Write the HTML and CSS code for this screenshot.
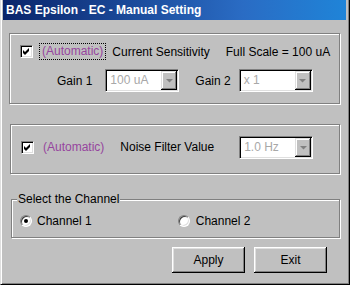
FILE: index.html
```html
<!DOCTYPE html>
<html lang="en">
<head>
    <meta charset="UTF-8">
    <title>BAS Epsilon - EC - Manual Setting</title>
    <link rel="stylesheet" href="styles.css">
</head>
<body>
    <div class="window">
        <div class="title-bar">BAS Epsilon - EC - Manual Setting</div>

        <!-- current sensitivity -->
        <div class="group group-gain">
            <div class="row row-top">
                <span class="check"><svg width="11" height="11" viewBox="0 0 11 11"><polygon points="2,4 4,6 8,2 8,5 4,9 2,7" fill="#000"/></svg></span>
                <span class="auto focus">(Automatic)</span>
                <span class="lbl lbl-sens">Current Sensitivity</span>
                <span class="lbl lbl-full">Full Scale = 100 uA</span>
            </div>
            <div class="row row-gain">
                <span class="lbl lbl-gain1">Gain 1</span>
                <div class="combo combo-g1">
                    <span class="combo-value">100 uA</span>
                    <span class="combo-btn"><svg width="7" height="5" viewBox="0 0 7 5"><polygon points="0,1 7,1 3.5,4.5" fill="#808080"/></svg></span>
                </div>
                <span class="lbl lbl-gain2">Gain 2</span>
                <div class="combo combo-g2">
                    <span class="combo-value">x 1</span>
                    <span class="combo-btn"><svg width="7" height="5" viewBox="0 0 7 5"><polygon points="0,1 7,1 3.5,4.5" fill="#808080"/></svg></span>
                </div>
            </div>
        </div>

        <!-- noise filter -->
        <div class="group group-noise">
            <div class="row row-noise">
                <span class="check"><svg width="11" height="11" viewBox="0 0 11 11"><polygon points="2,4 4,6 8,2 8,5 4,9 2,7" fill="#000"/></svg></span>
                <span class="auto">(Automatic)</span>
                <span class="lbl lbl-noise">Noise Filter Value</span>
                <div class="combo combo-noise">
                    <span class="combo-value">1.0 Hz</span>
                    <span class="combo-btn"><svg width="7" height="5" viewBox="0 0 7 5"><polygon points="0,1 7,1 3.5,4.5" fill="#808080"/></svg></span>
                </div>
            </div>
        </div>

        <!-- channel -->
        <div class="group group-channel">
            <span class="legend">Select the Channel</span>
            <div class="row row-channel">
                <span class="radio checked"></span>
                <span class="lbl lbl-ch1">Channel 1</span>
                <span class="radio radio-2"></span>
                <span class="lbl lbl-ch2">Channel 2</span>
            </div>
        </div>

        <div class="buttons">
            <button class="btn btn-apply">Apply</button>
            <button class="btn btn-exit">Exit</button>
        </div>
    </div>
</body>
</html>
```

FILE: styles.css
```css
/* base */
html, body {
    margin: 0;
    padding: 0;
    background: #c0c0c0;
}
body {
    font-family: 'Liberation Sans', Arial, sans-serif;
    font-size: 12px;
    color: #000;
}

/* window frame */
.window {
    width: 350px;
    height: 285px;
    box-sizing: border-box;
    background: #c0c0c0;
    border-left: 1px solid #dfdfdf;
    border-right: 1px solid #000;
    border-bottom: 1px solid #000;
    box-shadow: inset 1px 0 #fff, inset -1px -1px #808080;
    padding: 0 3px 0 2px;
    display: flex;
    flex-direction: column;
    align-items: flex-start;
}

.title-bar {
    align-self: stretch;
    height: 20px;
    line-height: 20px;
    padding-left: 3px;
    font-weight: bold;
    font-size: 12px;
    color: #fff;
    background: linear-gradient(to right, #0a246a, #2a6cc4 70%, #1f84d8);
}

/* etched group boxes */
.group {
    box-sizing: border-box;
    position: relative;
    border: 1px solid #808080;
    box-shadow: inset 1px 1px #fff, 1px 1px #fff;
}
.group-gain {
    margin: 13px 0 0 6px;
    width: 331px;
    height: 71px;
    padding: 9px 0 0 10px;
}
.group-noise {
    margin: 20px 0 0 7px;
    width: 330px;
    height: 50px;
    padding: 10px 0 0 10px;
}
.group-channel {
    margin: 25px 0 0 8px;
    width: 329px;
    height: 39px;
    padding: 14px 0 0 8px;
}
.legend {
    position: absolute;
    top: -8px;
    left: 5px;
    padding: 0 1px;
    line-height: 14px;
    background: #c0c0c0;
}

.row {
    display: flex;
    align-items: center;
}
.row-top { height: 17px; }
.row-gain { margin-top: 9px; height: 23px; }
.row-noise { height: 24px; }
.row-channel { height: 14px; }

.lbl { white-space: nowrap; }
.lbl-sens { margin-left: 6px; }
.lbl-full { margin-left: 16px; }
.lbl-gain1 { margin-left: 37px; }
.lbl-gain2 { margin-left: 16px; }
.lbl-noise { margin-left: 13px; }
.lbl-ch1 { margin-left: 5px; }
.lbl-ch2 { margin-left: 6px; }

/* checkbox */
.check {
    width: 13px;
    height: 13px;
    box-sizing: border-box;
    background: #fff;
    border: 1px solid;
    border-color: #808080 #fff #fff #808080;
    box-shadow: inset 1px 1px #000, inset -1px -1px #dfdfdf;
    flex-shrink: 0;
}
.check svg { display: block; }

.auto {
    margin-left: 6px;
    padding: 0 2px;
    line-height: 15px;
    color: #96459e;
    border: 1px solid transparent;
}
.auto.focus { border: 1px dotted #000; }

/* radio */
.radio {
    width: 12px;
    height: 12px;
    box-sizing: border-box;
    border-radius: 50%;
    background: #fff;
    border: 1px solid;
    border-color: #808080 #fff #fff #808080;
    box-shadow: inset 1px 1px #404040, inset -1px -1px #dfdfdf;
    position: relative;
    flex-shrink: 0;
}
.radio.checked::after {
    content: '';
    position: absolute;
    width: 4px;
    height: 4px;
    border-radius: 50%;
    background: #000;
    top: 3px;
    left: 3px;
}
.radio-2 { margin-left: 86px; }

/* combo boxes (disabled) */
.combo {
    width: 74px;
    height: 23px;
    box-sizing: border-box;
    background: #fff;
    border: 1px solid;
    border-color: #808080 #fff #fff #808080;
    box-shadow: inset 1px 1px #000, inset -1px -1px #dfdfdf;
    display: flex;
    align-items: stretch;
    padding: 1px;
    flex-shrink: 0;
}
.combo-value {
    flex: 1;
    padding-left: 3px;
    line-height: 19px;
    color: #a8a8a8;
}
.combo-btn {
    width: 16px;
    background: #c0c0c0;
    box-shadow: inset -1px -1px #000, inset 1px 1px #dfdfdf, inset -2px -2px #808080, inset 2px 2px #fff;
    display: flex;
    align-items: center;
    justify-content: center;
}
.combo-btn svg { display: block; }
.combo-g1 { margin-left: 13px; }
.combo-g2 { margin-left: 8px; }
.combo-noise { margin-left: 25px; }

/* push buttons */
.buttons {
    display: flex;
    margin: 9px 0 0 169px;
    gap: 9px;
}
.btn {
    width: 73px;
    height: 26px;
    padding: 0;
    border: none;
    background: #c0c0c0;
    font-family: 'Liberation Sans', Arial, sans-serif;
    font-size: 12px;
    color: #000;
    box-shadow: inset -1px -1px #000, inset 1px 1px #fff, inset -2px -2px #808080, inset 2px 2px #dfdfdf;
}
```
